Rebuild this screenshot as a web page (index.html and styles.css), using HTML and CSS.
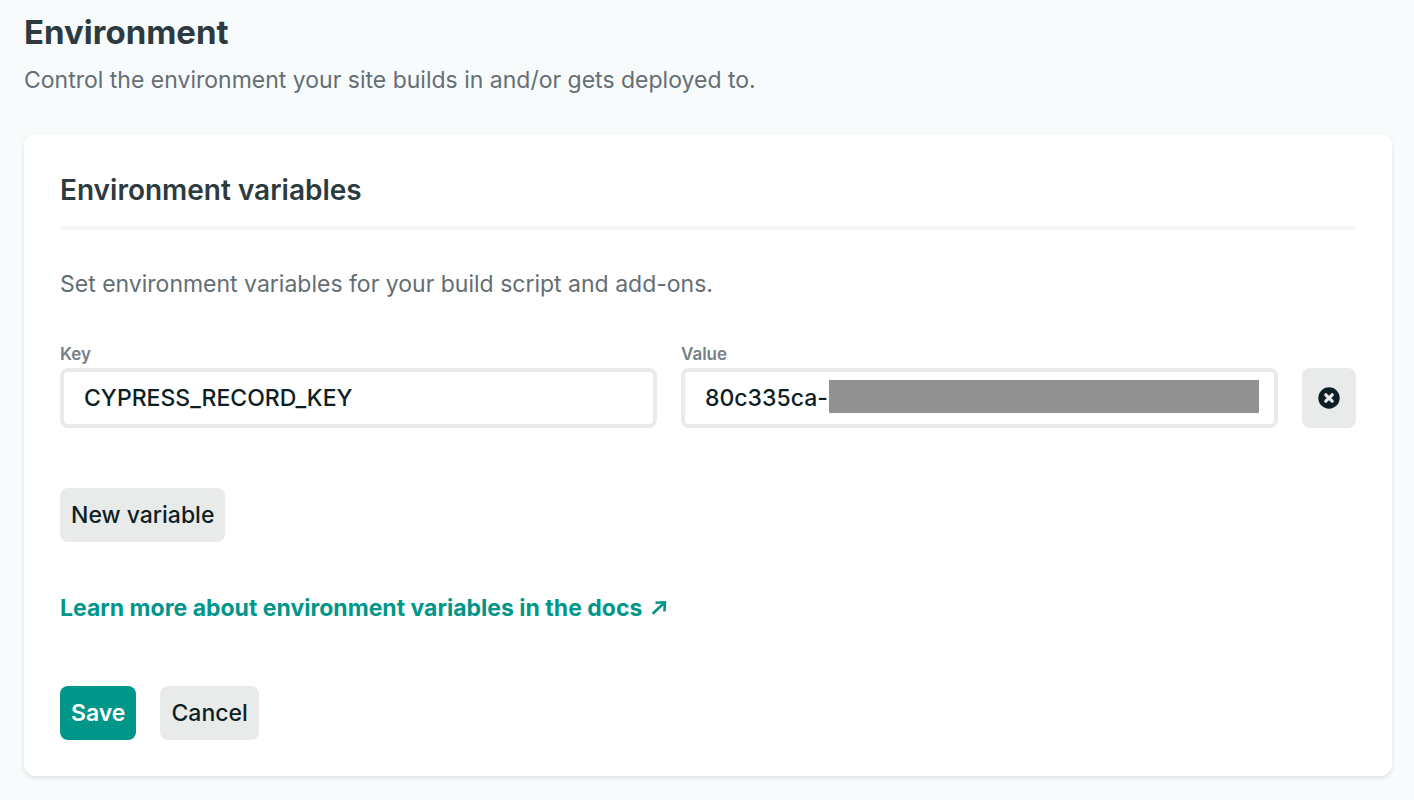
FILE: index.html
```html
<!DOCTYPE html>
<html lang="en">
<head>
    <meta charset="UTF-8">
    <meta name="viewport" content="width=device-width, initial-scale=1.0">
    <title>Environment</title>
    <link rel="stylesheet" href="styles.css">
</head>
<body>
    <main class="page">
        <header class="page-header">
            <h1>Environment</h1>
            <p>Control the environment your site builds in and/or gets deployed to.</p>
        </header>

        <section class="card">
            <h2>Environment variables</h2>
            <p class="intro">Set environment variables for your build script and add-ons.</p>

            <form class="env-form">
                <div class="variable-row">
                    <div class="field">
                        <label for="key">Key</label>
                        <input type="text" id="key" value="CYPRESS_RECORD_KEY">
                    </div>
                    <div class="field">
                        <label for="value">Value</label>
                        <div class="value-box">
                            <input type="text" id="value" value="80c335ca-">
                            <span class="redacted"></span>
                        </div>
                    </div>
                    <button type="button" class="btn btn-remove" aria-label="Delete variable">
                        <svg width="22" height="22" viewBox="0 0 22 22" aria-hidden="true">
                            <circle cx="11" cy="11" r="10.7" fill="#0e1e25"/>
                            <path d="M7.8 7.8l6.4 6.4M14.2 7.8l-6.4 6.4" stroke="#e9ebeb" stroke-width="3.2" stroke-linecap="round"/>
                        </svg>
                    </button>
                </div>

                <button type="button" class="btn btn-new">New variable</button>

                <a href="#docs" class="docs-link">Learn more about environment variables in the docs
                    <svg width="16" height="16" viewBox="0 0 16 16" aria-hidden="true">
                        <path d="M4.5 2.7L14 2.3L13.4 11.5M14 2.3L1.6 13.8" fill="none" stroke="currentColor" stroke-width="2.6" stroke-linejoin="round"/>
                    </svg>
                </a>

                <div class="actions">
                    <button type="submit" class="btn btn-primary">Save</button>
                    <button type="button" class="btn">Cancel</button>
                </div>
            </form>
        </section>
    </main>
</body>
</html>
```
FILE: styles.css
```css
* { box-sizing: border-box; }
body { margin: 0; background: #f8fbfc; color: #0e1e25; font-family: Inter, "Liberation Sans", sans-serif; font-size: 23px; line-height: 36px; }
h1, h2, p { margin: 0; }
.page { padding: 8px 22px 24px 24px; }
.page-header { margin-bottom: 36px; }
h1 { font-size: 33px; line-height: 48px; font-weight: 700; color: #2d3b41; }
.page-header p { margin-top: 6px; color: #646e73; }
.card { background: #fff; border-radius: 12px; padding: 36px; box-shadow: 0 2px 4px rgba(14,30,37,0.12); }
h2 { font-size: 28px; line-height: 40px; font-weight: 600; color: #2d3b41; padding-bottom: 16px; border-bottom: 4px solid #f5f6f6; }
.intro { margin-top: 36px; color: #646e73; }
.env-form { display: flex; flex-direction: column; align-items: flex-start; }
.variable-row { display: flex; align-items: flex-end; gap: 24px; width: 100%; margin-top: 40px; }
.field { flex: 1; }
.field label { display: block; margin-bottom: 2px; font-size: 17px; line-height: 24px; font-weight: 600; color: #778085; }
.field input { display: block; width: 100%; height: 60px; padding: 0 20px; border: 4px solid #e9ebeb; border-radius: 8px; background: #fff; color: #0e1e25; font: inherit; font-weight: 500; }
.value-box { position: relative; }
.redacted { position: absolute; top: 12px; right: 19px; left: 148px; height: 33px; background: #919191; }
.btn { height: 54px; padding: 0 11px; border: none; border-radius: 8px; background: #e9ebeb; color: #0e1e25; font: inherit; font-weight: 500; cursor: pointer; }
.btn-remove { display: flex; align-items: center; justify-content: center; width: 54px; height: 60px; padding: 0; }
.btn-new { margin-top: 60px; }
.docs-link { display: flex; align-items: center; gap: 9px; margin-top: 48px; color: #00968a; font-weight: 700; text-decoration: none; }
.actions { display: flex; gap: 24px; margin-top: 60px; }
.btn-primary { background: #00968a; color: #fff; font-weight: 600; }
```
